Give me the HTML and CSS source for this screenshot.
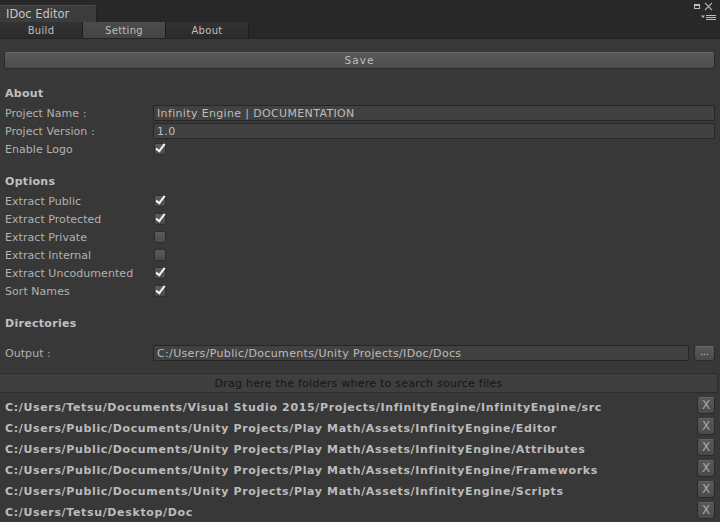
FILE: index.html
```html
<!DOCTYPE html>
<html>
<head>
<meta charset="utf-8">
<link rel="stylesheet" href="styles.css">
</head>
<body>
<div class="window">
  <div class="titlebar">
    <div class="tab">IDoc Editor</div>
    <svg class="winctl" width="26" height="22" viewBox="0 0 26 22">
      <rect x="0.5" y="4.5" width="5" height="4" fill="none" stroke="#bdbdbd" stroke-width="1"/>
      <rect x="0" y="4" width="6" height="2" fill="#bdbdbd"/>
      <path d="M11 3 L18 10 M18 3 L11 10" stroke="#a8a8a8" stroke-width="1.2"/>
      <path d="M7 15.5 L11 15.5 L9 18 Z" fill="#bdbdbd"/>
      <path d="M12 15.5 H22 M12 17.5 H22 M12 19.5 H22" stroke="#bdbdbd" stroke-width="1"/>
    </svg>
  </div>
  <div class="toolbar">
    <div class="tbtn">Build</div>
    <div class="tbtn active">Setting</div>
    <div class="tbtn">About</div>
  </div>

  <div class="content">
    <div class="savebtn">Save</div>

    <div class="header first">About</div>
    <div class="row"><span class="label">Project Name :</span><span class="field">Infinity Engine | DOCUMENTATION</span></div>
    <div class="row"><span class="label">Project Version :</span><span class="field">1.0</span></div>
    <div class="row"><span class="label">Enable Logo</span><span class="check on"></span></div>

    <div class="header">Options</div>
    <div class="row"><span class="label">Extract Public</span><span class="check on"></span></div>
    <div class="row"><span class="label">Extract Protected</span><span class="check on"></span></div>
    <div class="row"><span class="label">Extract Private</span><span class="check"></span></div>
    <div class="row"><span class="label">Extract Internal</span><span class="check"></span></div>
    <div class="row"><span class="label">Extract Uncodumented</span><span class="check on"></span></div>
    <div class="row"><span class="label">Sort Names</span><span class="check on"></span></div>

    <div class="header">Directories</div>
    <div class="row output"><span class="label">Output :</span><span class="field">C:/Users/Public/Documents/Unity Projects/IDoc/Docs</span><span class="browse">...</span></div>
  </div>

  <div class="dropzone">Drag here the folders where to search source files</div>

  <div class="list">
    <div class="item"><span class="path">C:/Users/Tetsu/Documents/Visual Studio 2015/Projects/InfinityEngine/InfinityEngine/src</span><span class="xbtn">X</span></div>
    <div class="item"><span class="path">C:/Users/Public/Documents/Unity Projects/Play Math/Assets/InfinityEngine/Editor</span><span class="xbtn">X</span></div>
    <div class="item"><span class="path">C:/Users/Public/Documents/Unity Projects/Play Math/Assets/InfinityEngine/Attributes</span><span class="xbtn">X</span></div>
    <div class="item"><span class="path">C:/Users/Public/Documents/Unity Projects/Play Math/Assets/InfinityEngine/Frameworks</span><span class="xbtn">X</span></div>
    <div class="item"><span class="path">C:/Users/Public/Documents/Unity Projects/Play Math/Assets/InfinityEngine/Scripts</span><span class="xbtn">X</span></div>
    <div class="item"><span class="path">C:/Users/Tetsu/Desktop/Doc</span><span class="xbtn">X</span></div>
  </div>
</div>
</body>
</html>
```

FILE: styles.css
```css
html, body {
  margin: 0;
  padding: 0;
  background: #383838;
  overflow: hidden;
}
body {
  width: 720px;
  height: 522px;
  font-family: "DejaVu Sans", "Liberation Sans", sans-serif;
  font-size: 11px;
  color: #b4b4b4;
}
.window {
  display: flex;
  flex-direction: column;
  height: 522px;
}
.titlebar {
  height: 22px;
  background: #282828;
  display: flex;
  align-items: flex-end;
}
.tab {
  width: 97px;
  height: 17px;
  box-sizing: border-box;
  background: #3c3c3c;
  border-top: 1px solid #4c4c4c;
  border-right: 1px solid #222;
  border-radius: 0 3px 0 0;
  color: #c6c6c6;
  font-size: 11.5px;
  padding-left: 6px;
  line-height: 16px;
}
.winctl {
  margin-left: auto;
  align-self: flex-start;
}
.toolbar {
  height: 16px;
  background: #282828;
  display: flex;
  border-bottom: 1px solid #242424;
}
.tbtn {
  width: 83px;
  height: 16px;
  box-sizing: border-box;
  background: linear-gradient(#333, #2b2b2b);
  border-right: 1px solid #1e1e1e;
  color: #bdbdbd;
  font-size: 10px;
  letter-spacing: 0.3px;
  text-align: center;
  line-height: 17px;
}
.tbtn.active {
  background: linear-gradient(#4c4c4c, #444);
}
.content {
  padding: 13px 5px 0 4px;
  display: flex;
  flex-direction: column;
}
.savebtn {
  height: 17px;
  box-sizing: border-box;
  background: linear-gradient(#5a5a5a, #4c4c4c);
  border: 1px solid #2a2a2a;
  border-top-color: #676767;
  border-radius: 3px;
  color: #bcbcbc;
  text-align: center;
  line-height: 15px;
  letter-spacing: 1px;
  font-size: 10.5px;
}
.header {
  height: 18px;
  line-height: 18px;
  font-weight: bold;
  color: #c0c0c0;
  padding-left: 1px;
  margin-top: 15px;
  margin-bottom: 1px;
  letter-spacing: 0.3px;
}
.header.first {
  margin-top: 16px;
}
.row {
  height: 18px;
  display: flex;
  align-items: center;
  padding-left: 1px;
}
.row.output {
  margin-top: 10px;
}
.label {
  width: 148px;
  flex: none;
  letter-spacing: 0.05px;
  color: #b2b2b2;
}
.field {
  flex: 1;
  height: 16px;
  box-sizing: border-box;
  background: #414141;
  border: 1px solid #272727;
  border-radius: 1px;
  color: #bdbdbd;
  padding-left: 3px;
  line-height: 15px;
  letter-spacing: 0.35px;
  white-space: nowrap;
  overflow: hidden;
}
.browse {
  width: 21px;
  height: 15px;
  margin-left: 5px;
  box-sizing: border-box;
  background: linear-gradient(#5a5a5a, #4b4b4b);
  border: 1px solid #2a2a2a;
  border-top-color: #666;
  border-radius: 3px;
  color: #d0d0d0;
  text-align: center;
  font-size: 9px;
  line-height: 10px;
}
.check {
  width: 12px;
  height: 12px;
  margin-left: 1px;
  box-sizing: border-box;
  background: linear-gradient(#5c5c5c, #4a4a4a);
  border: 1px solid #2e2e2e;
  border-radius: 2px;
  position: relative;
}
.check.on::after {
  content: "";
  position: absolute;
  left: 3px;
  top: -2px;
  width: 3px;
  height: 8px;
  border-right: 2px solid #f4f4f4;
  border-bottom: 2px solid #f4f4f4;
  transform: rotate(38deg);
}
.dropzone {
  margin-top: 11px;
  margin-right: 2px;
  height: 20px;
  box-sizing: border-box;
  background: #3f3f3f;
  border: 1px solid #2c2c2c;
  border-left: none;
  color: #151515;
  text-align: center;
  line-height: 19px;
  letter-spacing: 0.25px;
}
.list {
  padding: 3px 5px 0 5px;
  display: flex;
  flex-direction: column;
}
.item {
  height: 21px;
  display: flex;
  align-items: center;
}
.path {
  flex: 1;
  font-weight: bold;
  color: #bcbcbc;
  white-space: nowrap;
  letter-spacing: 0.65px;
  padding-top: 1px;
}
.xbtn {
  width: 18px;
  height: 17px;
  box-sizing: border-box;
  background: linear-gradient(#585858, #4a4a4a);
  border: 1px solid #2a2a2a;
  border-top-color: #626262;
  border-radius: 3px;
  color: #a8a8a8;
  text-align: center;
  font-size: 12px;
  line-height: 15px;
  align-self: flex-start;
  margin-top: 1px;
}
```
